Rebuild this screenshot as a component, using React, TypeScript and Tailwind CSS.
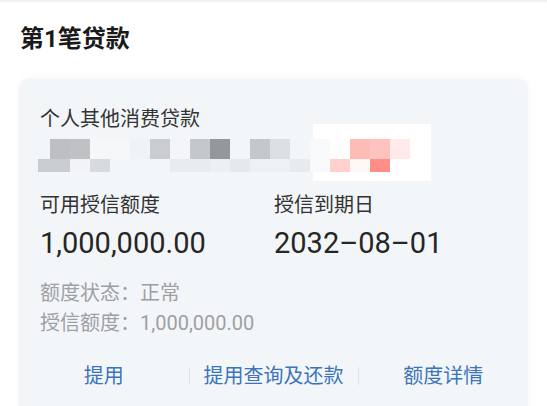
import React from "react"

const row1: [number, number, string][] = [
  [50, 20, "#bdbfc2"],
  [70, 20, "#bfc1c4"],
  [90, 40, "#f5f7f9"],
  [130, 20, "#f0f3f6"],
  [150, 20, "#c9ccd0"],
  [170, 20, "#f3f5f8"],
  [190, 20, "#c5c8cb"],
  [210, 20, "#94989b"],
  [250, 20, "#c5c8cb"],
  [270, 20, "#dde0e3"],
  [310, 20, "#f8f9fb"],
  [330, 20, "#fefefe"],
  [350, 20, "#ffbcb6"],
  [370, 20, "#ffc3bf"],
  [390, 20, "#ffe9e9"],
]

const row2: [number, number, string][] = [
  [38, 32, "#cacdd0"],
  [70, 20, "#f1f3f6"],
  [90, 20, "#d8dbde"],
  [170, 40, "#e9ecef"],
  [210, 20, "#edf0f3"],
  [230, 20, "#e6e9ec"],
  [250, 40, "#eef1f4"],
  [290, 20, "#e8ebee"],
  [310, 20, "#f8f9fb"],
  [330, 20, "#ffd0cc"],
  [350, 20, "#fdf8f6"],
  [370, 20, "#ff8f86"],
]

// 打码区域
function Mosaic() {
  return (
    <svg width="400" height="57" viewBox="38 124 400 57" className="block -ml-[2px] -mt-[5px]">
      <rect x="313" y="124" width="118" height="57" fill="#ffffff" />
      {row1.map(([x, w, c]) => (
        <rect key={"a" + x} x={x} y={139} width={w} height={20} fill={c} />
      ))}
      {row2.map(([x, w, c]) => (
        <rect key={"b" + x} x={x} y={159} width={w} height={13} fill={c} />
      ))}
    </svg>
  )
}

const actions = ["提用", "提用查询及还款", "额度详情"]

export default function App() {
  return (
    <div className="w-[547px] h-[406px] overflow-hidden bg-white font-['Roboto','Noto_Sans_CJK_SC',sans-serif]">
      <div className="h-[3px] bg-gradient-to-b from-[#ebebeb] to-white" />
      <div className="px-[19px]">
        <h2 className="mt-[20px] text-[24px] leading-[32px] font-bold text-[#1a1a1a] pl-[1px]">第1笔贷款</h2>

        <div className="mt-[24px] rounded-[10px] bg-[#f3f6f9] shadow-[0_0_6px_rgba(0,0,0,0.05)] pt-[30px] pb-[30px]">
          <div className="px-[21px]">
            <p className="text-[20px] leading-[20px] text-[#333]">个人其他消费贷款</p>
            <Mosaic />

            <div className="grid grid-cols-[234px_1fr] mt-[10px]">
              <div>
                <p className="text-[20px] leading-[28px] text-[#333]">可用授信额度</p>
                <p className="mt-[7px] text-[29px] leading-[34px] text-[#262626]">1,000,000.00</p>
              </div>
              <div>
                <p className="text-[20px] leading-[28px] text-[#333]">授信到期日</p>
                <p className="mt-[7px] text-[29px] leading-[34px] text-[#262626]">2032–08–01</p>
              </div>
            </div>

            <div className="mt-[18px] text-[20px] leading-[30px] text-[#9da0a4]">
              <div className="flex">
                <span>额度状态：</span>
                <span>正常</span>
              </div>
              <div className="flex">
                <span>授信额度：</span>
                <span>1,000,000.00</span>
              </div>
            </div>
          </div>

          <div className="mt-[24px] grid grid-cols-3">
            {actions.map((a, i) => (
              <div key={a} className="relative flex items-center justify-center">
                {i > 0 && <span className="absolute left-0 top-[5px] h-[18px] w-px bg-[#dfe5ec]" />}
                <button className="text-[20px] leading-[28px] text-[#3b74ba]">{a}</button>
              </div>
            ))}
          </div>
        </div>
      </div>
    </div>
  )
}
